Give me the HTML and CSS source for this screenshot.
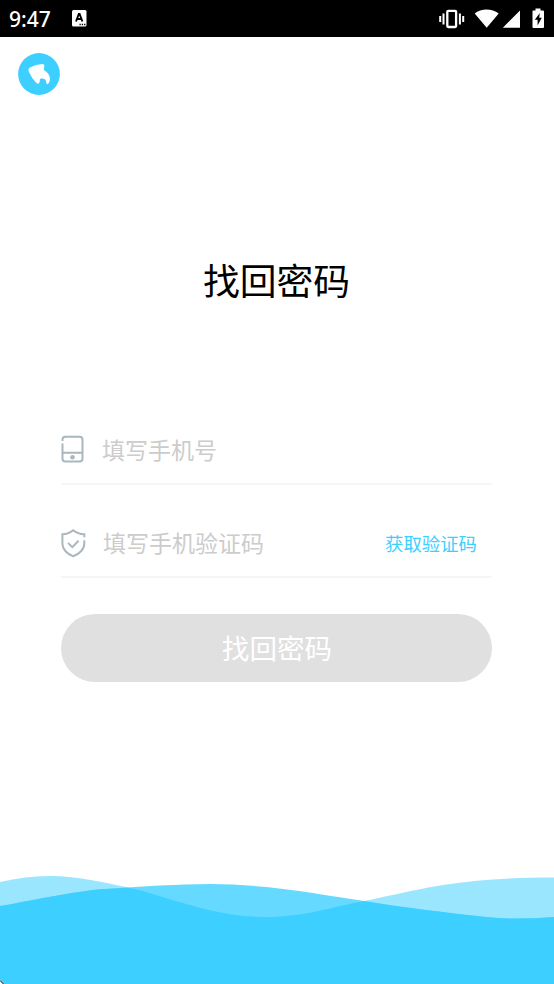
FILE: index.html
```html
<!DOCTYPE html>
<html lang="zh-CN">
<head>
<meta charset="utf-8">
<title>找回密码</title>
<link rel="stylesheet" href="styles.css">
</head>
<body>
<div class="screen">
  <div class="status">
    <span class="clock">9:47</span>
    <svg class="ime" width="15" height="17" viewBox="0 0 15 17"><rect width="14.5" height="16.5" rx="1.5" fill="#fff"/><path d="M4 11.500 6.800 4h.8l2.800 7.500M5.200 9h4" fill="none" stroke="#000" stroke-width="1.900"/><path d="M7.500 14.500h6" stroke="#000" stroke-width="1.300" stroke-dasharray="1.300 1"/></svg>
    <svg class="indicators" width="110" height="24" viewBox="0 0 110 24">
      <g fill="none" stroke="#fff"><rect x="11.300" y="3.800" width="8.800" height="16.200" rx="1" stroke-width="2.300"/><path d="M7.500 6.500v11M23.900 6.500v11" stroke-width="2"/><path d="M4.200 9v6M27.200 9v6" stroke-width="2"/></g>
      <path d="M38.700 6.500C45 1 56 1 62.700 6.500L50.700 20.800Z" fill="#fff"/>
      <path d="M84 3.500V20.800H66.800Z" fill="#fff"/>
      <path d="M97 3.500h2.500V1.500h5v2h2.500q1 0 1 1V20q0 1-1 1h-9.500q-1 0-1-1V4.500q0-1 .5-1Z" fill="#fff"/>
      <path d="M103.800 6 98.800 12.800h2.800v5.700l4.200-7.700h-2.600Z" fill="#000"/>
    </svg>
  </div>
  <header class="header">
    <button class="back" aria-label="返回"><svg width="42" height="42" viewBox="0 0 42 42"><circle cx="21" cy="21" r="20.900" fill="#3dcfff"/><path d="M24.500 11Q18 11.300 11.500 14.800Q9.600 16.200 10.700 18.500Q13.500 25 18.200 29.800Q20.800 32 21.500 29.300L22.200 25.800C26 25 28.200 26.500 28.300 30Q28.600 31.600 30 31C33.500 27.500 32.500 20.500 25.800 17L26.400 12.800Q26.500 11 24.500 11Z" fill="#fff"/></svg></button>
  </header>
  <main class="main">
    <h1 class="title">找回密码</h1>
    <form class="form">
      <div class="field">
        <svg class="phone" width="24" height="28" viewBox="0 0 24 28" fill="none" stroke="#aab7bd" stroke-width="2"><path d="M1.500 6V4.500Q1.500 1.700 4.300 1.700H18.700Q21.500 1.700 21.500 4.500V23.700Q21.500 26.500 18.700 26.500H4.300Q1.500 26.500 1.500 23.700V8.500M1.500 17.700H21.500"/><circle cx="11.500" cy="22.200" r="2.300" fill="#aab7bd" stroke="none"/></svg>
        <span class="hint">填写手机号</span>
      </div>
      <div class="field code">
        <svg class="shield" width="25" height="29" viewBox="0 0 25 29" fill="none" stroke="#aab7bd" stroke-width="2"><path d="M23.300 8.200V5.300Q16.700 5 12.200 1.200Q7.700 5 1.400 5.300V14.700C1.400 20.200 6.200 25.200 12.200 27.200C18.200 25.200 23.300 20.200 23.300 14.700V11.200M7 13.900l4.300 4.200 6.300-6.400"/></svg>
        <span class="hint">填写手机验证码</span>
        <span class="get-code">获取验证码</span>
      </div>
      <button class="submit" type="button">找回密码</button>
    </form>
  </main>
  <svg class="waves" width="554" height="114" viewBox="0 0 554 114">
    <defs>
      <path id="back-wave" d="M0 12C17 8 33 6 50 6C79 6 106 13 130 18C164 25 211 47 265 47C306 47 331 37 364 31C415 21 454 7.500 554 7.500V114H0Z"/>
      <clipPath id="back-area"><use href="#back-wave"/></clipPath>
      <path id="front-wave" d="M0 36C35 30 78 20 110 18.700C143 16.500 177 14 210 14C266 14 318 24 364 31C405 38 442 42 486 47Q515 50 554 47V114H0Z"/>
    </defs>
    <use href="#back-wave" fill="#9ae6ff"/>
    <use href="#front-wave" fill="#65d9ff"/>
    <use href="#front-wave" fill="#3dcfff" clip-path="url(#back-area)"/>
    <path d="M0 110 4 114H0Z" fill="#fff"/><path d="M0 110.500 3.500 114" stroke="#000"/>
  </svg>
</div>
</body>
</html>
```
FILE: styles.css
```css
* {
  box-sizing: border-box;
}

body {
  margin: 0;
  background: #fff;
  font-family: "Noto Sans CJK SC", sans-serif;
}

.screen {
  display: flex;
  flex-direction: column;
  width: 554px;
  height: 984px;
  overflow: hidden;
}

.status {
  display: flex;
  align-items: center;
  height: 37px;
  padding: 0 8px 0 9px;
  background: #000;
  color: #fff;
}

.clock {
  width: 63px;
  font: 500 21px/37px "Noto Sans", sans-serif;
  padding-top: 1px;
}

.indicators {
  margin-left: auto;
}

.header {
  height: 74px;
  padding: 16px 18px;
}

.back {
  display: block;
  padding: 0;
  border: 0;
  background: none;
}

.back svg {
  display: block;
}

.main {
  flex: 1;
  padding: 140px 62px 0 61px;
}

.title {
  margin: 0;
  height: 56px;
  color: #000;
  font-size: 36.8px;
  font-weight: 400;
  line-height: 56px;
  text-align: center;
}

.form {
  margin-top: 108px;
}

.field {
  display: flex;
  align-items: center;
  height: 70px;
  border-bottom: 2px solid #f6f6f6;
}

.code {
  height: 93px;
  padding: 25px 15px 0 0;
}

.hint {
  margin-left: 17px;
  color: #ccc;
  font-size: 23px;
  line-height: 34px;
}

.code .hint {
  padding-bottom: 2px;
}

.get-code {
  margin-left: auto;
  color: #3dcfff;
  font-size: 18.4px;
}

.submit {
  display: block;
  width: 431px;
  height: 68px;
  margin-top: 36px;
  padding: 0 0 2px 1px;
  border: 0;
  border-radius: 34px;
  background: #e0e0e0;
  color: #fff;
  font: 400 27.6px/66px "Noto Sans CJK SC", sans-serif;
}

.waves {
  display: block;
  flex: none;
}
```
